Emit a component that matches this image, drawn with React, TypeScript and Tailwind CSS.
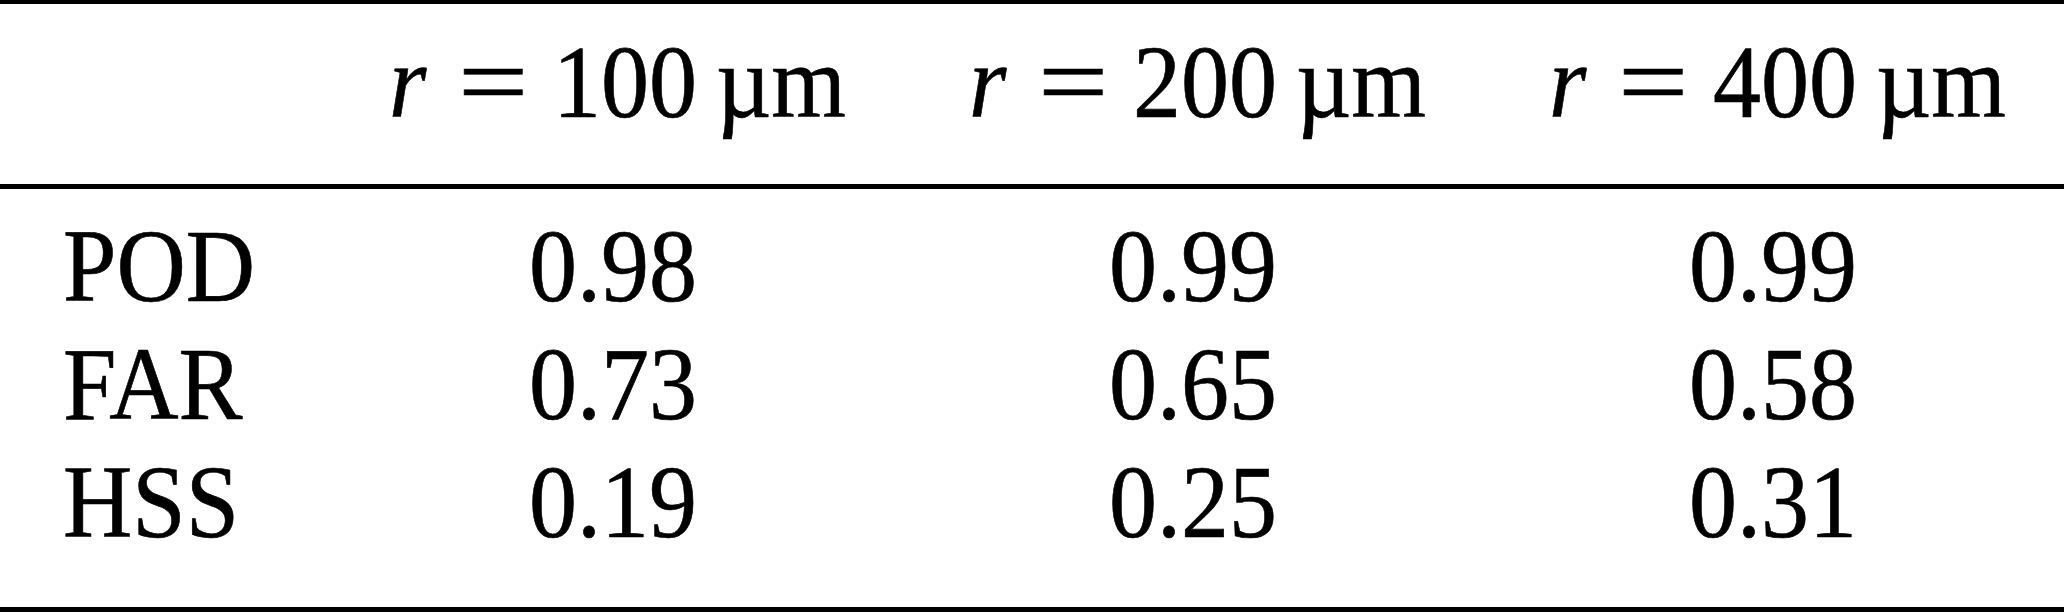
import React from "react";

const headers = ["100", "200", "400"];
const rows: { label: string; values: string[] }[] = [
  { label: "POD", values: ["0.98", "0.99", "0.99"] },
  { label: "FAR", values: ["0.73", "0.65", "0.58"] },
  { label: "HSS", values: ["0.19", "0.25", "0.31"] },
];

function Header({ value }: { value: string }) {
  return (
    <div className="flex items-baseline pl-[66px] origin-[0_85.5px] scale-y-[1.09]">
      <span className="w-[69px] shrink-0 italic">r</span>
      <span className="w-[95px] shrink-0">
        <span className="inline-block origin-left scale-x-[1.3]">=</span>
      </span>
      <span className="w-[163px] shrink-0">{value}</span>
      <span className="shrink-0">µm</span>
    </div>
  );
}

function Cell({ children }: { children: React.ReactNode }) {
  return (
    <span className="inline-block origin-[50%_91.4px] scale-y-[1.09]">{children}</span>
  );
}

export default function App() {
  return (
    <div className="w-[2064px] bg-white text-black font-['Liberation_Serif','Times_New_Roman',serif] text-[96px] [-webkit-text-stroke:0.6px_#000]">
      <div className="h-[4px] bg-black" />
      <div className="grid grid-cols-[323px_580px_580px_580px] pt-[28px] pb-[46px] leading-[106px]">
        <div />
        {headers.map((h) => (
          <Header key={h} value={h} />
        ))}
      </div>
      <div className="h-[5px] bg-black" />
      <div className="pt-[21px] pb-[43px] leading-[118px]">
        {rows.map((r) => (
          <div key={r.label} className="grid grid-cols-[323px_580px_580px_580px]">
            <div className="pl-[63px]">
              <Cell>{r.label}</Cell>
            </div>
            {r.values.map((v, i) => (
              <div key={i} className="text-center">
                <Cell>{v}</Cell>
              </div>
            ))}
          </div>
        ))}
      </div>
      <div className="h-[5px] bg-black" />
    </div>
  );
}
